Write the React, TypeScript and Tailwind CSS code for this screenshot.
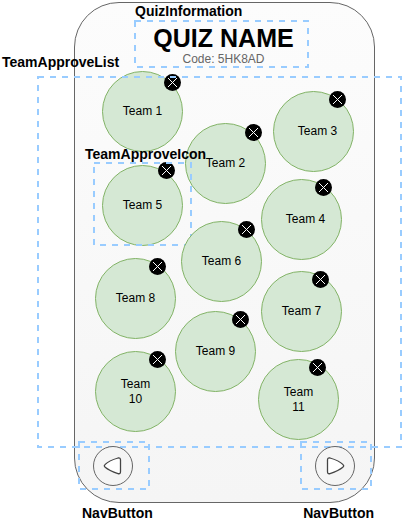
import React from "react";

type Team = {
  name: string;
  x: number;
  y: number;
  badgeX: number;
  badgeY: number;
  indent?: boolean;
  callout?: string;
};

// Positions are measured from the top left corner of the bubble canvas.
const teams: Team[] = [
  { name: "Team 1", x: 27, y: 4, badgeX: 62, badgeY: 3 },
  { name: "Team 2", x: 110, y: 56, badgeX: 60, badgeY: 1 },
  { name: "Team 3", x: 198, y: 24, badgeX: 56, badgeY: 0, indent: true },
  { name: "Team 4", x: 186, y: 112, badgeX: 54, badgeY: 0, indent: true },
  { name: "Team 5", x: 27, y: 98, badgeX: 56, badgeY: -3, callout: "TeamApproveIcon" },
  { name: "Team 6", x: 106, y: 154, badgeX: 57, badgeY: 0 },
  { name: "Team 7", x: 186, y: 204, badgeX: 51, badgeY: 0 },
  { name: "Team 8", x: 20, y: 191, badgeX: 54, badgeY: 0 },
  { name: "Team 9", x: 100, y: 244, badgeX: 57, badgeY: 0 },
  { name: "Team 10", x: 20, y: 284, badgeX: 54, badgeY: 0 },
  { name: "Team 11", x: 183, y: 292, badgeX: 51, badgeY: 0 },
];

function Outline({ className }: { className: string }) {
  return (
    <svg className={`pointer-events-none absolute overflow-visible ${className}`} aria-hidden="true">
      <rect width="100%" height="100%" fill="none" stroke="#99ccff" strokeWidth="2" strokeDasharray="6 6" />
    </svg>
  );
}

function TeamBubble({ team }: { team: Team }) {
  return (
    <li className="absolute size-[81px]" style={{ left: team.x, top: team.y }}>
      <div
        className={`flex size-full items-center justify-center rounded-full border border-[#82b366] bg-[#d5e8d4] text-center text-xs leading-[15px] ${
          team.indent ? "pl-2" : ""
        }`}
      >
        <span className={team.name.length > 6 ? "w-10" : ""}>{team.name}</span>
      </div>
      <button
        type="button"
        aria-label={`Remove ${team.name}`}
        className="absolute size-[17px] rounded-full bg-black"
        style={{ left: team.badgeX, top: team.badgeY }}
      >
        <svg viewBox="0 0 17 17" className="size-full" fill="none" stroke="#fff">
          <path d="M4 4l9 9M13 4l-9 9" />
        </svg>
      </button>
      {team.callout && (
        <>
          <Outline className="-top-0.5 -left-2 h-[82px] w-[97px]" />
          <span className="absolute -top-[19px] -left-[17px] text-sm leading-4 font-bold">{team.callout}</span>
        </>
      )}
    </li>
  );
}

function NavButton({ direction }: { direction: "back" | "next" }) {
  return (
    <div className="relative h-[47px] w-[70px] pt-1 pl-3.5">
      <button
        type="button"
        aria-label={direction === "back" ? "Back" : "Next"}
        className="block size-10 rounded-full border border-[#666] bg-[#f5f5f5]"
      >
        <svg
          viewBox="0 0 38 38"
          className={`size-full ${direction === "next" ? "-scale-x-100" : ""}`}
          fill="#fff"
          stroke="#444"
          strokeWidth="1.3"
        >
          <path d="M11.2 17.4Q15 13.6 24 11Q26.5 10.4 26.5 13V24.4Q26.5 27.4 24 26.6Q15 23.4 11.2 20.2Q9.4 18.8 11.2 17.4Z" />
        </svg>
      </button>
      <Outline className="inset-0 size-full" />
    </div>
  );
}

export default function App() {
  return (
    <main className="mx-auto max-w-[402px] bg-white pt-0.5 font-['Liberation_Sans',Arial,sans-serif] text-black">
      <section className="mr-[27px] ml-[74px] rounded-[45px] border border-[#666] bg-linear-to-b from-[#fcfcfc] to-[#f5f5f5]">
        <header className="flex flex-col gap-0.5 pl-[60px]">
          <span className="text-sm leading-4 font-bold">QuizInformation</span>
          <div className="relative w-[173px] pt-[3px] pl-1 text-center whitespace-nowrap">
            <h1 className="text-[25px] leading-7 font-bold">QUIZ NAME</h1>
            <p className="text-xs leading-[15px] text-[#666]">Code: 5HK8AD</p>
            <Outline className="inset-0 size-full" />
          </div>
        </header>
        <ul className="relative h-[375px]">
          {teams.map((team) => (
            <TeamBubble key={team.name} team={team} />
          ))}
          <li className="pointer-events-none absolute top-2.5 -left-[37px] h-[370px] w-[363px]">
            <Outline className="inset-0 size-full" />
            <span className="absolute -top-[23px] -left-9 text-sm leading-4 font-bold">TeamApproveList</span>
          </li>
        </ul>
        <nav className="flex justify-between pr-[3px] pb-[13px] pl-1">
          <NavButton direction="back" />
          <NavButton direction="next" />
        </nav>
      </section>
      <div className="mr-7 ml-[82px] flex justify-between pt-0.5 text-sm leading-4 font-bold">
        <span>NavButton</span>
        <span>NavButton</span>
      </div>
    </main>
  );
}
